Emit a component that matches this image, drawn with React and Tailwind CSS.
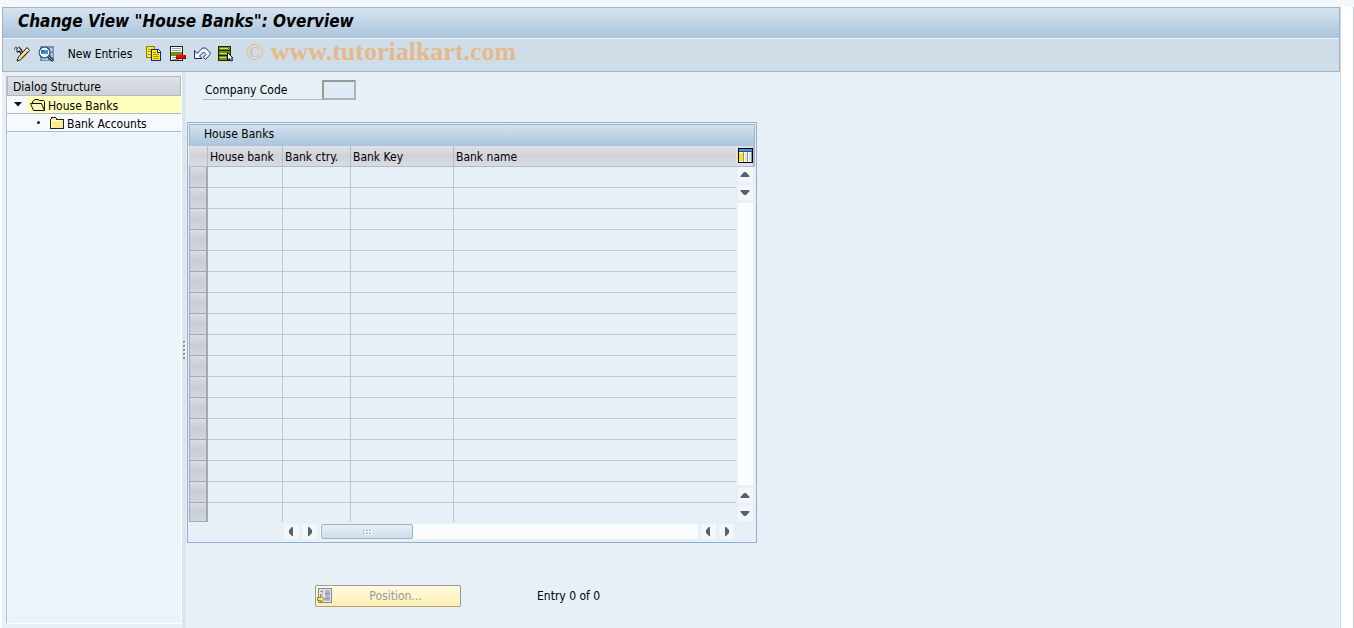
const ROWS = Array.from({ length: 17 }, (_, i) => i);

function PencilIcon() {
  return (
    <svg width="16" height="16" viewBox="0 0 16 16" aria-hidden="true">
      <path d="M0.500 3.500C0.500 0.500 3 0.500 3 2.500S1.500 4 2.500 3.500S4.500 0.500 5.500 1S5 3.500 6.500 2.500" fill="none" stroke="#333" />
      <path d="M2.500 5.500H5.500L7.500 8.500M6.500 2.500L8.500 6.500" fill="none" stroke="#111" strokeWidth="1.300" />
      <path d="M13 1.500L15.500 4.500L7 13.500L3 15L4.500 11Z" fill="#fff" />
      <path d="M11.500 4L14.500 6L7.500 13.500L5.500 11Z" fill="#f8a63a" />
      <path d="M10 4.500L12.500 6L7 11.500L5.500 10.500Z" fill="#ffe2b8" />
      <path d="M13 1.500L15.500 4.500L7 13.500L3 15L4.500 11Z" fill="none" stroke="#111" />
    </svg>
  );
}

function DisplayIcon() {
  return (
    <svg width="16" height="16" viewBox="0 0 16 16" aria-hidden="true">
      <path d="M2 0H16V15H2Z" fill="#6f93b5" />
      <path d="M12 2H14.500V5H12ZM13 7H14.500V11H13ZM4 12H10V14H4Z" fill="#b5cde4" />
      <circle cx="6.500" cy="6.500" r="5.300" fill="#eaf3fb" stroke="#2c4a68" strokeWidth="1.200" />
      <circle cx="6.500" cy="6.500" r="4.300" fill="none" stroke="#fff" />
      <path d="M3 4H10V8H3Z" fill="#3a93e6" />
      <path d="M3 4H6V6H3Z" fill="#1c66c4" />
      <path d="M10.500 10.500L15 15" stroke="#1b2c40" strokeWidth="2.600" />
      <path d="M10.500 10.500L14.500 14.500" stroke="#e9eff5" strokeWidth="0.700" />
    </svg>
  );
}

function CopyIcon() {
  return (
    <svg width="16" height="16" viewBox="0 0 16 16" shapeRendering="crispEdges" aria-hidden="true">
      <path d="M0.500 0.500H8.500V11.500H0.500Z" fill="#ffee00" stroke="#8a7a20" />
      <path d="M2 3.500H5M2 5.500H5M2 8.500H5" stroke="#a59220" />
      <path d="M5.500 3.500H12L14.500 6V14.500H5.500Z" fill="#fff200" stroke="#1a1ea8" />
      <path d="M11.500 3.500V6.500H14.500" fill="#fff" stroke="#1a1ea8" />
      <path d="M7 6.500H10M7 8.500H13M7 10.500H13M7 12.500H13" stroke="#a59220" />
    </svg>
  );
}

function DeleteIcon() {
  return (
    <svg width="16" height="16" viewBox="0 0 16 16" shapeRendering="crispEdges" aria-hidden="true">
      <path d="M0.500 0.500H12.500V14.500H0.500Z" fill="#fff" stroke="#222" />
      <path d="M2 2H11V3H2ZM2 4H11V5H2Z" fill="#9aa3b5" />
      <path d="M1 6H12V10H1Z" fill="#6f9400" />
      <path d="M2 11H6V12H2ZM2 13H9V14H2Z" fill="#9aa3b5" />
      <path d="M6 9H16V13H6Z" fill="#700" />
      <path d="M6 9H15V12H6Z" fill="#f00" />
    </svg>
  );
}

function UndoIcon() {
  return (
    <svg width="17" height="16" viewBox="0 0 17 16" aria-hidden="true">
      <path
        d="M0.500 4.500V12.500H8L5.500 10L9.500 6L12 8.500L9.500 11L11.500 13.500L16 8.500V6.500L11.500 2H8.500L3 7.500Z"
        fill="#f4f7fb"
        stroke="#1c2a7a"
      />
    </svg>
  );
}

function SelectAllIcon() {
  return (
    <svg width="16" height="16" viewBox="0 0 16 16" shapeRendering="crispEdges" aria-hidden="true">
      <path d="M0 0H13V15H0Z" fill="#1d2608" />
      <path d="M1 1H12V4H1ZM1 5H12V9H1ZM1 10H12V14H1Z" fill="#6f9400" />
      <path d="M2 2H10V3H2ZM2 7H9V8H2ZM2 11H8V12H2Z" fill="#c9de86" />
      <path d="M9.500 6.500V14L11.500 12.500L13 15L14.500 14.500L13.500 12H15Z" fill="#fff" stroke="#111" shapeRendering="auto" />
    </svg>
  );
}

function OpenFolderIcon() {
  return (
    <svg width="16" height="14" viewBox="0 0 16 14" aria-hidden="true">
      <path d="M2.500 5V3.500L5 1.500H8L9.500 2.500H13.500L14.500 3.500V12.500H4" fill="#fff3a8" stroke="#111" />
      <path d="M0.500 5.500H11.500L14.500 12.500H3.500Z" fill="#fff6bd" stroke="#111" />
    </svg>
  );
}

function FolderIcon() {
  return (
    <svg width="14" height="12" viewBox="0 0 14 12" shapeRendering="crispEdges" aria-hidden="true">
      <path d="M0.500 11.500V2.500L2 0.500H5.500L7 2.500H13.500V11.500Z" fill="#ffeb8f" stroke="#222" />
      <path d="M1.500 10V3.500H12" fill="none" stroke="#fffbe0" />
    </svg>
  );
}

function ColumnsIcon() {
  return (
    <svg width="15" height="15" viewBox="0 0 15 15" shapeRendering="crispEdges" aria-hidden="true">
      <path d="M0 0H15V15H0Z" fill="#000" />
      <path d="M1 1H14V14H1Z" fill="#fff" />
      <path d="M1 1H14V4H1Z" fill="#4d93d8" />
      <path d="M1 3H14V4H1Z" fill="#1d5494" />
      <path d="M1 5H5V13H1Z" fill="#ffe600" />
      <path d="M7 5H9V13H7ZM11 5H13V13H11Z" fill="#dfe3e8" />
      <path d="M5 4H6V14H5ZM9 4H10V14H9ZM13 4H14V14H13Z" fill="#8a97a8" />
    </svg>
  );
}

function PositionIcon() {
  return (
    <svg width="15" height="15" viewBox="0 0 15 15" shapeRendering="crispEdges" aria-hidden="true">
      <path d="M1.500 0.500H14.500V14.500H1.500Z" fill="#e3e6ea" stroke="#85888f" />
      <path d="M8 2H13V13H8Z" fill="#b4b5c9" />
      <path d="M8 5.500H13M8 10.500H13" stroke="#8e90a6" />
      <path d="M3 3.500H6M3 6.500H6M5.500 2V5" stroke="#9a9da6" />
      <path d="M0.500 9.500H3.500V7.500L7.500 11L3.500 14.500V12.500H0.500Z" fill="#ffe55c" stroke="#8d8148" shapeRendering="auto" />
    </svg>
  );
}

const ARROWS = {
  up: "M6 5H8L11.500 9V10H2.500V9Z",
  down: "M2.500 5H11.500V6L8 10H6L2.500 6Z",
  left: "M5 6L8 3H9V12H8L5 9Z",
  right: "M10 6L7 3H6V12H7L10 9Z",
};

function ScrollButton({ dir, label }) {
  return (
    <button type="button" aria-label={label} className="size-[15px] shrink-0 bg-[#f3f7fb]">
      <svg width="15" height="15" viewBox="0 0 15 15" aria-hidden="true">
        <path d={ARROWS[dir]} fill="#4d6274" />
      </svg>
    </button>
  );
}

function ToolButton({ label, children }) {
  return (
    <button type="button" aria-label={label} className="size-4 shrink-0">
      {children}
    </button>
  );
}

function Header() {
  return (
    <header className="border border-[#a3b2c5] bg-[#cfdde8]">
      <div className="flex h-[31px] items-center border-b border-b-[#eef4f9] bg-linear-to-b from-[#d5e3ef] to-[#abc4dc] px-[15px] pb-1">
        <h1 className="text-[17px] font-bold italic">Change View "House Banks": Overview</h1>
      </div>
      <div className="flex h-8 items-center gap-2 px-[11px] pb-[2px]">
        <ToolButton label="Change"><PencilIcon /></ToolButton>
        <ToolButton label="Display"><DisplayIcon /></ToolButton>
        <button type="button" className="mx-1 w-[68px] whitespace-nowrap">New Entries</button>
        <ToolButton label="Copy"><CopyIcon /></ToolButton>
        <ToolButton label="Delete"><DeleteIcon /></ToolButton>
        <ToolButton label="Undo"><UndoIcon /></ToolButton>
        <ToolButton label="Select all"><SelectAllIcon /></ToolButton>
        <span className="ml-1 whitespace-nowrap pb-1 font-['Liberation_Serif',serif] text-[26px] leading-6 text-[#e4b98c]">
          <span className="text-2xl leading-6">©</span> <b>www.tutorialkart.com</b>
        </span>
      </div>
    </header>
  );
}

function Tree() {
  return (
    <nav className="mt-1 mb-1 ml-1 flex w-44 shrink-0 flex-col border border-t-0 border-white border-l-[#b9c3d6] bg-[#ebf3fb]">
      <h2 className="flex h-5 items-center border border-[#b0b9c4] bg-linear-to-b from-[#dfe1e4] to-[#cdd2d9] px-[5px] pt-px">Dialog Structure</h2>
      <ul>
        <li className="flex h-[18px] items-center border-b border-[#a9bacb] bg-[#f6faff]">
          <button type="button" aria-label="Collapse" className="flex w-5 justify-center pl-[2px]">
            <svg width="8" height="5" viewBox="0 0 8 5" aria-hidden="true"><path d="M0 0H8L4 4.500Z" fill="#111" /></svg>
          </button>
          <a href="#banks" className="flex h-full grow items-center gap-[2px] bg-[#ffffbe] pl-[3px]">
            <OpenFolderIcon />
            <span className="pt-[2px]">House Banks</span>
          </a>
        </li>
        <li className="flex h-[18px] items-center border-b border-[#a9bacb] bg-[#f6faff]">
          <a href="#accounts" className="flex items-center gap-[3px] pl-[30px]">
            <span className="mr-[7px] size-[3px] rounded-full bg-[#222]" />
            <FolderIcon />
            <span className="pt-[2px]">Bank Accounts</span>
          </a>
        </li>
      </ul>
    </nav>
  );
}

function Splitter() {
  return (
    <div className="flex w-1 shrink-0 items-center justify-center bg-[#dbe5ec]">
      <svg width="3" height="18" viewBox="0 0 3 18" shapeRendering="crispEdges" aria-hidden="true">
        <path d="M1 1H3V3H1ZM1 5H3V7H1ZM1 9H3V11H1ZM1 13H3V15H1ZM1 17H3V18H1Z" fill="#fff" />
        <path d="M0 0H2V2H0ZM0 4H2V6H0ZM0 8H2V10H0ZM0 12H2V14H0ZM0 16H2V18H0Z" fill="#8796a5" />
      </svg>
    </div>
  );
}

function BankTable() {
  const head = "h-[21px] border-r border-b border-[#b4bac8] bg-linear-to-b from-[#dfe1e3] via-[#cfd3d9] to-[#d9dce0] px-[2px] pt-[2px] pb-0 text-left font-normal";
  const cell = "h-[21px] border-r border-b border-[#bdc6d6] p-0 group-last:h-[19px] group-last:border-b-0";
  return (
    <section className="w-[570px] border border-[#8fb0d0] p-px">
      <h2 className="flex h-[22px] items-center border border-b-0 border-[#9fb3cc] bg-linear-to-b from-[#d3e2ef] to-[#abc4dc] px-[14px] pb-[3px]">House Banks</h2>
      <div className="flex">
        <table className="w-[547px] shrink-0 table-fixed border-separate border-spacing-0">
          <thead>
            <tr>
              <th className={`${head} w-[19px]`} aria-label="Select"></th>
              <th className={`${head} w-[75px]`}>House bank</th>
              <th className={`${head} w-[68px]`}>Bank ctry.</th>
              <th className={`${head} w-[103px]`}>Bank Key</th>
              <th className={`${head} border-r-0`}>Bank name</th>
            </tr>
          </thead>
          <tbody>
            {ROWS.map((r) => (
              <tr key={r} className="group">
                <td className="h-[21px] border border-t-0 border-r-2 border-[#a0aabd] bg-linear-to-b from-[#dadde1] via-[#c9cdd5] to-[#d3d6dc] p-0 group-last:h-[19px]"></td>
                <td className={cell}></td>
                <td className={cell}></td>
                <td className={cell}></td>
                <td className={`${cell} border-r-0`}></td>
              </tr>
            ))}
          </tbody>
        </table>
        <div className="flex grow flex-col items-center">
          <button type="button" aria-label="Configure columns" className="flex h-[21px] w-full items-center justify-center border-r-2 border-b border-[#a9b6cb] bg-[#dcdfe3] pb-px pl-[2px]">
            <ColumnsIcon />
          </button>
          <div className="flex grow flex-col items-center gap-[3px] pb-px">
            <ScrollButton dir="up" label="Scroll up" />
            <ScrollButton dir="down" label="Scroll down" />
            <div className="w-[15px] grow bg-[#fbfcfd]" />
            <ScrollButton dir="up" label="Scroll up" />
            <ScrollButton dir="down" label="Scroll down" />
          </div>
        </div>
      </div>
      <div className="flex gap-[3px] pt-[2px] pr-[21px] pb-[2px] pl-[95px]">
        <ScrollButton dir="left" label="Scroll left" />
        <ScrollButton dir="right" label="Scroll right" />
        <div className="flex h-[15px] grow bg-[#fbfcfd] pl-px">
          <div className="flex w-[92px] items-center justify-center rounded-xs border border-[#a3b2c0] bg-linear-to-b from-[#e6eef6] to-[#cfdeeb]">
            <svg width="9" height="6" viewBox="0 0 9 6" shapeRendering="crispEdges" aria-hidden="true">
              <path d="M1 1H3V3H1ZM4 1H6V3H4ZM7 1H9V3H7ZM1 4H3V6H1ZM4 4H6V6H4ZM7 4H9V6H7Z" fill="#fff" />
              <path d="M0 1H2V2H0ZM3 1H5V2H3ZM6 1H8V2H6ZM0 4H2V5H0ZM3 4H5V5H3ZM6 4H8V5H6Z" fill="#a3b3c2" />
            </svg>
          </div>
        </div>
        <ScrollButton dir="left" label="Scroll left" />
        <ScrollButton dir="right" label="Scroll right" />
      </div>
    </section>
  );
}

export default function App() {
  return (
    <div className="flex min-h-screen flex-col bg-white font-['DejaVu_Sans_Condensed','DejaVu_Sans',sans-serif] text-xs leading-4 text-black">
      <div className="h-[7px] shrink-0 bg-[#f3f6fb]" />
      <div className="flex grow border-r border-[#c5cbdb] pr-3 pl-[2px]">
        <div className="flex min-w-0 grow flex-col border-r border-[#d0d9e6] bg-[#e8f0f7]">
          <Header />
          <div className="flex grow">
            <Tree />
            <Splitter />
            <main className="grow pt-2 pl-px">
              <form className="flex items-start pl-4">
                <label htmlFor="company" className="flex h-5 w-[119px] items-center border-b border-[#b3b8ba] pt-px pl-[2px]">Company Code</label>
                <input id="company" type="text" className="h-5 w-[34px] rounded-none border-2 border-[#b0b4b6] border-t-[#999] border-l-[#999] bg-[#dfebf4]" />
              </form>
              <div className="mt-[22px]">
                <BankTable />
              </div>
              <div className="mt-[42px] flex items-center pl-32">
                <button type="button" className="flex h-[22px] w-[146px] items-center rounded-xs border border-[#9c9c96] border-b-[#b9a26a] bg-linear-to-b from-[#fffae0] to-[#feefb4] px-px pb-px text-[#999]">
                  <PositionIcon />
                  <span className="grow pt-px text-center">Position...</span>
                </button>
                <span className="ml-[76px]">Entry 0 of 0</span>
              </div>
            </main>
          </div>
        </div>
      </div>
    </div>
  );
}
